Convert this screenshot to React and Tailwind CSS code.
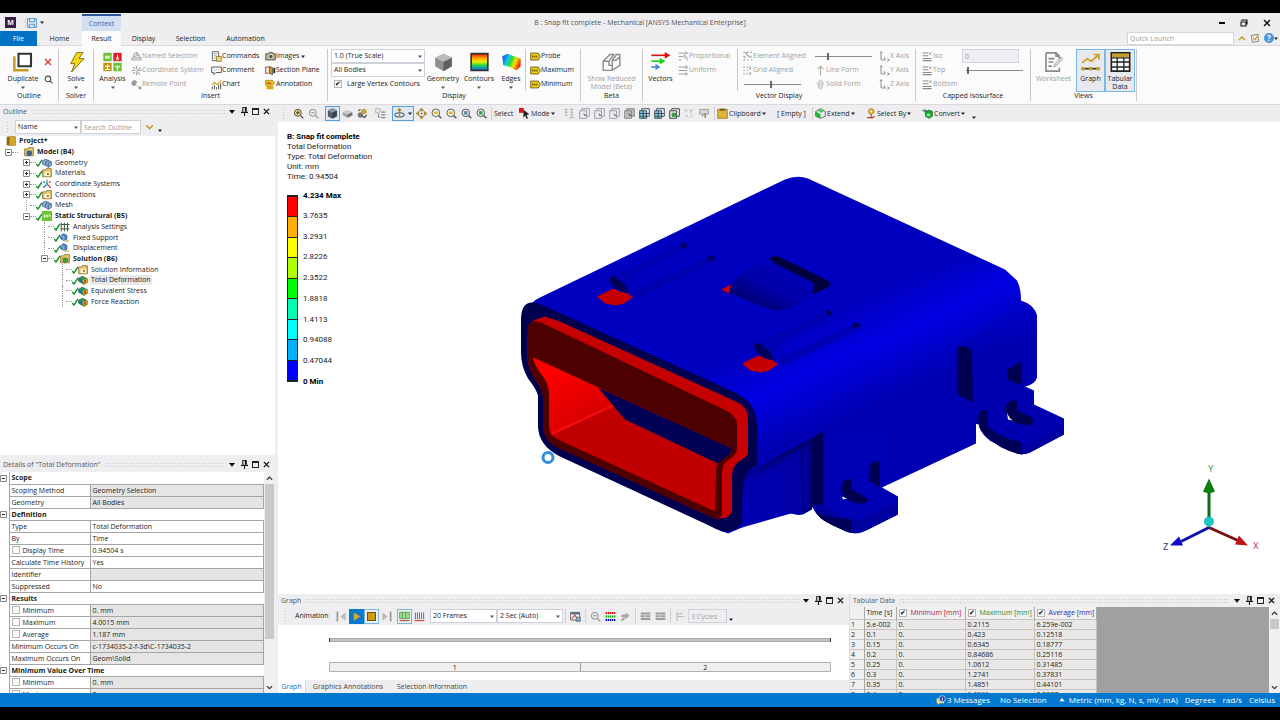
import { useState } from "react";
import clsx from "clsx";

const Svg = ({ size = "w-[11px] h-[11px]", children, box = "0 0 16 16" }) => (
  <svg viewBox={box} className={clsx(size, "shrink-0")} fill="none" aria-hidden="true">
    {children}
  </svg>
);

// ---------- small icons (16 unit grid) ----------
const icons = {
  zoomIn: (
    <>
      <circle cx="7" cy="7" r="5" fill="#f4d77a" stroke="#444" strokeWidth="1.4" />
      <path d="M11 11l4 4M4.500 7h5M7 4.500v5" stroke="#333" strokeWidth="1.500" />
    </>
  ),
  zoomOut: (
    <>
      <circle cx="7" cy="7" r="5" stroke="#888" strokeWidth="1.400" />
      <path d="M11 11l4 4M4.500 7h5" stroke="#888" strokeWidth="1.500" />
    </>
  ),
  zoomBox: (
    <>
      <circle cx="7" cy="7" r="5.500" fill="#fff" stroke="#555" strokeWidth="1.400" />
      <path d="M11 11l4 4" stroke="#555" strokeWidth="2" />
      <path d="M4 5h6v4H4z" fill="#e3b32c" />
    </>
  ),
  zoomBlue: (
    <>
      <circle cx="7" cy="7" r="5.500" fill="#dfe8f4" stroke="#555" strokeWidth="1.400" />
      <path d="M11 11l4 4" stroke="#555" strokeWidth="2" />
      <path d="M4.500 4.500h5v5h-5z" fill="#6c87a8" />
    </>
  ),
  zoomGreen: (
    <>
      <circle cx="7" cy="7" r="5.500" fill="#dff0e4" stroke="#555" strokeWidth="1.400" />
      <path d="M11 11l4 4" stroke="#555" strokeWidth="2" />
      <path d="M4.500 4.500h5v5h-5z" fill="#3c9a57" />
    </>
  ),
  cubeDark: (
    <>
      <path d="M8 1l6 3v8l-6 3-6-3V4z" fill="#55606d" stroke="#333" />
      <path d="M2 4l6 3 6-3-6-3z" fill="#8d99a6" />
      <path d="M8 7v8l6-3V4z" fill="#3a424c" />
    </>
  ),
  cubeFlat: (
    <>
      <path d="M1 6l7-3 7 3v5l-7 3-7-3z" fill="#a6a6a6" />
      <path d="M1 6l7-3 7 3-7 3z" fill="#cfcfcf" />
      <path d="M8 9v5l7-3V6z" fill="#777" />
    </>
  ),
  random: (
    <>
      <circle cx="5" cy="10" r="4" fill="#777" />
      <circle cx="10" cy="5" r="4" fill="#caa43a" />
      <path d="M8 12l3 2 3-4M2 4l3-2" stroke="#333" strokeWidth="1.500" />
    </>
  ),
  treeList: (
    <>
      <path d="M1 1h6v6H1z" stroke="#999" />
      <path d="M9 6h6M9 10h6M9 14h6M5 8v5h3" stroke="#888" strokeWidth="1.500" />
    </>
  ),
  rotate: (
    <>
      <ellipse cx="8" cy="10" rx="7" ry="3" stroke="#333" strokeWidth="1.300" />
      <path d="M8 1v12M5.500 4L8 1l2.500 3" stroke="#b88a12" strokeWidth="1.800" />
    </>
  ),
  pan: (
    <>
      <path d="M8 0l3 4H5zM8 16l3-4H5zM0 8l4-3v6zM16 8l-4-3v6z" fill="#d7a31a" stroke="#5e4a10" strokeWidth=".7" />
      <path d="M7 7h2v2H7z" fill="#5e4a10" />
    </>
  ),
  cursor: (
    <>
      <path d="M0 0h7v7H0z" fill="#e01010" />
      <path d="M7 3l8 6-4 1 2 5-2 1-2-5-3 3z" fill="#222" />
    </>
  ),
  dots: (
    <path d="M1 2h5M1 6h5M2 10h4M9 2h5M10 6h4M9 10h5M3 1v12M11 1v12M8 14h6" stroke="#a9a9a9" strokeWidth="1.500" strokeDasharray="3 1" />
  ),
  boxCursor: (
    <>
      <path d="M1 4h10v11H1zM4 4V1h11v11h-4" stroke="#8a8f94" strokeWidth="1.200" />
      <path d="M6 7l5 4-3 1z" fill="#777" />
    </>
  ),
  boxSolid: (
    <>
      <path d="M1 4h10v11H1zM4 4V1h11v11h-4" fill="#bdbdbd" stroke="#777" strokeWidth="1.200" />
      <path d="M6 7l5 4-3 1z" fill="#555" />
    </>
  ),
  mesh: (
    <>
      <path d="M1 4h10v11H1z" fill="#8dd0ea" />
      <path d="M1 4h10v11H1zM4 4V1h11v11h-4M1 8h14M6 4v11M1 12h10" stroke="#26343c" strokeWidth="1.200" />
    </>
  ),
  meshGreen: (
    <>
      <path d="M1 4h10v11H1z" fill="#d8ead8" />
      <path d="M1 4h10v11H1zM4 4V1h11v11h-4" stroke="#444" strokeWidth="1.400" />
      <path d="M4 7h7v6H4z" fill="#3e9d52" />
    </>
  ),
  xyz: <path d="M1 2l3 3M4 2L1 5M8 2l2 3 2-3M10 5v3M3 10l3 4M12 10l-2 4" stroke="#a9a9a9" strokeWidth="1.200" />,
  tag: (
    <>
      <path d="M1 2h13v7H7l-2 3V9H1z" fill="#d3d3d3" stroke="#8b8b8b" />
      <path d="M9 8v6" stroke="#8a7a3a" strokeWidth="2" />
    </>
  ),
  clipboard: (
    <>
      <path d="M1 2h14v13H1z" fill="#e0b23a" stroke="#8a6a10" />
      <path d="M4 1h8v3H4z" fill="#6f5b1d" />
    </>
  ),
  extend: (
    <>
      <path d="M8 1l7 4v7l-7 3-7-3V5z" fill="#eee" stroke="#333" />
      <path d="M1 5l7 4v6l-7-3z" fill="#18b830" />
      <path d="M4 4l4-2 5 3-4 2z" fill="#35d050" />
    </>
  ),
  selectBy: (
    <>
      <circle cx="9" cy="5" r="4" fill="#e7b52b" stroke="#92700e" />
      <path d="M9 9v4M3 14h8l3-2" stroke="#b3332b" strokeWidth="1.500" />
      <circle cx="9" cy="5" r="1.500" fill="#fff" />
    </>
  ),
  convert: (
    <>
      <path d="M5 5l5-2 5 2v7l-5 3-5-3z" fill="#14a52c" stroke="#0b5d18" />
      <path d="M7 8h5v4H7z" fill="#7cf08c" />
      <path d="M0 4h5M3 2l3 2-3 2" stroke="#333" />
    </>
  ),
  named: (
    <>
      <path d="M1 13h14v-3H1zM3 10l2-7 6 1 2 6" fill="#eee" stroke="#999" strokeWidth="1.200" />
      <path d="M8 1v4M5 8l6-2" stroke="#888" />
    </>
  ),
  coord: (
    <path d="M9 8l5-4M8 9l5 5M6 8H1M8 6V1M3 3l3 3M3 13l3-3M11 8h4M8 11v4" stroke="#a2a2a2" strokeWidth="1.500" />
  ),
  remote: (
    <>
      <path d="M1 4l4-3 4 3-3 6-5-1z" fill="#9a9a9a" />
      <path d="M11 11h4v4h-4z" fill="#999" />
      <path d="M7 9l5 4" stroke="#bbb" />
    </>
  ),
  commands: (
    <>
      <path d="M2 1h9v13H2z" fill="#fff" stroke="#555" strokeWidth="1.300" />
      <path d="M4 4h5M4 7h4M4 10h3" stroke="#777" />
      <path d="M8 8h7v7H8z" fill="#f3d56a" stroke="#7a6920" />
    </>
  ),
  comment: (
    <>
      <path d="M1 3h14v8H7l-3 3v-3H1z" fill="#fff" stroke="#555" strokeWidth="1.400" />
      <path d="M4 7h1M7 7h1M10 7h1" stroke="#555" strokeWidth="1.500" />
    </>
  ),
  chart: (
    <>
      <path d="M2 15v-4M5 15V9M8 15v-3M11 15V8M14 15V6" stroke="#555" strokeWidth="1.400" />
      <path d="M1 9l4-4 4 3 6-6" stroke="#d5a321" strokeWidth="1.500" />
    </>
  ),
  images: (
    <>
      <path d="M1 4h4l1-2h5l1 2h3v9H1z" fill="#b8b089" stroke="#4b4b3c" strokeWidth="1.200" />
      <circle cx="8.500" cy="8" r="3.200" fill="#4c5963" stroke="#fff" />
    </>
  ),
  section: (
    <>
      <path d="M1 3h4M1 3v9h4" stroke="#c23b2d" strokeWidth="1.600" />
      <path d="M6 2l5 2v10l-5-2z" fill="#c79a1b" stroke="#333" />
      <path d="M12 4h3v8h-3z" fill="#3a3a3a" />
    </>
  ),
  annotation: (
    <>
      <path d="M1 2h10l3 3-3 4H1z" fill="#f0c514" stroke="#87690b" />
      <path d="M2 10h10v5H2z" fill="#e0a90e" />
      <path d="M3 6h6" stroke="#c62a1d" strokeWidth="1.600" />
    </>
  ),
  probe: (
    <>
      <path d="M1 3h11l3 5-3 5H1z" fill="#f3cf17" stroke="#5b4c0a" strokeWidth="1.200" />
      <path d="M3 8h8" stroke="#6b5908" strokeWidth="3" strokeDasharray="2 1" />
    </>
  ),
  propo: <path d="M1 3h9M1 8h7M1 13h4M10 1l4 2-4 2M8 6l4 2-4 2M13 9v5" stroke="#9a9a9a" strokeWidth="1.400" />,
  uniform: <path d="M1 3h12M1 8h12M1 13h12M11 1l3 2-3 2M11 11l3 2-3 2" stroke="#9a9a9a" strokeWidth="1.400" />,
  elemAl: <path d="M2 2h2M7 2h2M12 2h2M2 7l3 3M8 6l3 3M13 7v3M2 13h3M8 13h2M13 13h2M5 2l3 4" stroke="#999" strokeWidth="1.600" />,
  gridAl: <path d="M2 3h2M2 8h2M2 13h2M7 3h2M7 8h2M7 13h2M12 2v5M12 10v4" stroke="#999" strokeWidth="1.800" />,
  upArrow: <path d="M8 15V3M4 6l4-4 4 4" stroke="#aaa" strokeWidth="1.600" />,
  upSolid: <path d="M8 1l5 6h-2v5l-3 3-3-3V7H3z" fill="#ddd" stroke="#aaa" />,
  axis: <path d="M3 1v12h7M1 3l2-2 2 2M12 11l3 2-3 2M8 9v3" stroke="#888" strokeWidth="1.400" />,
  iso: (
    <>
      <path d="M1 3h8M1 7h8M1 11h13M1 14h13" stroke="#888" strokeWidth="1.500" />
      <path d="M10 2l4 4M14 2l-4 4" stroke="#999" strokeWidth="1.300" />
    </>
  ),
  exportImg: (
    <>
      <path d="M1 2h13v11H1z" fill="#fff" stroke="#555" strokeWidth="1.400" />
      <path d="M2 4h11" stroke="#31609a" strokeWidth="2" />
      <path d="M3 11l4-5 3 4" stroke="#c33" strokeWidth="1.500" />
      <path d="M9 9h6v6H9z" fill="#6fb0e0" stroke="#555" />
    </>
  ),
  grayChip: <path d="M1 2h14v3H1zM1 6h6v3H1zM8 6h7v3H8zM1 10h14v3H1z" fill="#9c9c9c" />,
  wrench: (
    <>
      <path d="M2 5h6V2l6 5-6 5V9H2z" fill="#a6a6a6" />
      <path d="M2 14l5-4" stroke="#999" strokeWidth="2" />
    </>
  ),
  cyc: <path d="M3 1v14M3 8h11M3 5l8-2" stroke="#bbb" strokeWidth="1.600" />,
  project: (
    <>
      <path d="M1 1h5v14H1z" fill="#8c6a10" />
      <path d="M5 1h10v14H5z" fill="#d8a628" stroke="#8c6a10" />
    </>
  ),
  folder: (
    <>
      <path d="M1 3h5l1-2h8v13H1z" fill="#e9c766" stroke="#7c6220" strokeWidth="1.200" />
      <path d="M4 6h9v7H4z" fill="#f8f3df" />
      <path d="M8 8h3v3H8z" fill="#a9772a" />
    </>
  ),
  model: (
    <>
      <path d="M1 3h5l1-2h8v13H1z" fill="#e9c766" stroke="#7c6220" strokeWidth="1.200" />
      <path d="M8 5l5 2v5l-5 3-4-3V7z" fill="#42658d" />
    </>
  ),
  solution: (
    <>
      <path d="M1 3h5l1-2h8v13H1z" fill="#e9c766" stroke="#7c6220" strokeWidth="1.200" />
      <path d="M8 5l5 2v5l-5 3-4-3V7z" fill="#49933a" />
    </>
  ),
  geom: (
    <>
      <path d="M1 4l5-2 5 2 4 2v6l-5 3-4-3-5-2z" fill="#87abd4" stroke="#2e4c70" />
      <path d="M6 6l5-2M6 6v6M10 8v7M10 8l5-2" stroke="#2e4c70" />
    </>
  ),
  cs: (
    <>
      <path d="M8 7V1" stroke="#2b8a3a" strokeWidth="1.700" />
      <path d="M7 9l-5 5M2 4l3 2" stroke="#2d55bb" strokeWidth="1.700" />
      <path d="M9 9l5 5M14 4l-3 2" stroke="#c03030" strokeWidth="1.700" />
      <circle cx="8" cy="8" r="2" fill="#2fa9a0" />
    </>
  ),
  struct: (
    <>
      <path d="M0 0h16v16H0z" fill="#66c430" />
      <path d="M2 8h12M4 5v6M8 5v6M12 5v3" stroke="#eaffdc" strokeWidth="1.400" />
    </>
  ),
  settings: <path d="M2 1v14M7 1v14M12 1v14M1 4h14M1 11h14" stroke="#385a45" strokeWidth="1.600" />,
  support: (
    <>
      <path d="M6 1l5 3v6l-5 2-5-3V4z" fill="#4b86c8" stroke="#1e3f68" />
      <path d="M1 4l5 2v6" stroke="#cfe3f7" />
      <path d="M8 14l3-2 1 2 3-3" stroke="#d59c1c" strokeWidth="1.600" />
    </>
  ),
  result: (
    <>
      <path d="M1 5l6-3 8 4v6l-5 3-9-5z" fill="#2d9c4c" stroke="#224a2e" />
      <path d="M7 8l8-2v6l-5 3z" fill="#e3b51c" />
      <path d="M1 5l6 3v3l-6-2z" fill="#2a62b8" />
      <path d="M10 8l3-1v5l-3 1z" fill="#d3321f" />
    </>
  ),
};

const Icon = ({ name, size }) => <Svg size={size}>{icons[name]}</Svg>;

const Caret = ({ small }) => (
  <Svg size={small ? "w-[4px] h-[3px]" : "w-[6px] h-[5px]"} box="0 0 8 6">
    <path d="M0 1h8L4 6z" fill="currentColor" />
  </Svg>
);

// ---------- big ribbon pictures ----------
const big = {
  duplicate: (
    <>
      <path d="M1 5v17h17" stroke="#c99b20" strokeWidth="3" />
      <path d="M6 2h15v15H6z" fill="#fff" stroke="#333" strokeWidth="2.500" />
    </>
  ),
  solve: <path d="M12 1l8-1-5 8h6L6 24l4-10H5z" fill="#f5d913" stroke="#665a14" />,
  analysis: (
    <>
      <path d="M1 1h10v10H1zM13 13h10v10H13z" fill="#6cc13a" />
      <path d="M13 1h10v10H13z" fill="#de1d23" />
      <path d="M1 13h10v10H1z" fill="#c29412" />
      <path d="M3 5h6M3 7h6M18 3v5M3 17h6M6 15v6M3 21h6M18 16v6M15 17l3 2 3-2" stroke="#fff" strokeWidth="1.300" />
      <circle cx="18" cy="8" r="1.500" stroke="#fff" />
    </>
  ),
  geometry: (
    <>
      <path d="M12 2l10 5v10l-10 6L2 17V7z" fill="#8f8f8f" />
      <path d="M2 7l10-5 10 5-10 5z" fill="#bcbcbc" />
      <path d="M12 12v11l10-6V7z" fill="#5f5f5f" />
    </>
  ),
  contours: (
    <>
      <defs>
        <linearGradient id="rainbowV" x1="0" y1="0" x2="0" y2="1">
          <stop offset="0" stopColor="#f31212" />
          <stop offset=".3" stopColor="#ffb400" />
          <stop offset=".5" stopColor="#e8f000" />
          <stop offset=".7" stopColor="#19d94b" />
          <stop offset="1" stopColor="#1c63f2" />
        </linearGradient>
      </defs>
      <path d="M2 2h20v20H2z" fill="url(#rainbowV)" stroke="#333" strokeWidth="2" />
    </>
  ),
  edges: (
    <>
      <defs>
        <linearGradient id="rainbowH" x1="0" y1=".2" x2="1" y2=".6">
          <stop offset="0" stopColor="#1746e8" />
          <stop offset=".3" stopColor="#0fc9e8" />
          <stop offset=".5" stopColor="#2be02b" />
          <stop offset=".7" stopColor="#f5e400" />
          <stop offset="1" stopColor="#f01c0e" />
        </linearGradient>
      </defs>
      <path d="M1 5l6-3 16 6v9l-5 5-10-5-6-1z" fill="url(#rainbowH)" />
    </>
  ),
  reduced: (
    <path
      d="M2 11v11h11l9-6V6l-5 4h-4v6H9v-5zM2 11l8-8h5l-6 8M13 10l5-7h4v3M13 22v-6"
      stroke="#8a8a8a"
      strokeWidth="1.700"
    />
  ),
  vectors: (
    <>
      <path d="M1 4h17" stroke="#e11010" strokeWidth="2" />
      <path d="M17 0l7 4-7 4z" fill="#e11010" />
      <path d="M1 11h11" stroke="#1fd01f" strokeWidth="2" />
      <path d="M11 7l7 4-7 4z" fill="#1fd01f" />
      <path d="M1 18h6" stroke="#4a86d8" strokeWidth="2" />
      <path d="M6 14l6 4-6 4z" fill="#4a86d8" />
    </>
  ),
  worksheet: (
    <>
      <path d="M3 1h12l4 4v4M3 1v22h16v-4M15 1v4h4" stroke="#8a8a8a" strokeWidth="2" />
      <path d="M6 8h7M6 12h6M6 17h4" stroke="#8a8a8a" strokeWidth="2" />
      <path d="M12 18l2-4 7-8 2 2-7 8z" fill="#ddd" stroke="#999" />
    </>
  ),
  graph: (
    <>
      <path d="M2 13l6-5 5 3 8-7M16 3h6v6" stroke="#c99b20" strokeWidth="2" />
      <path d="M1 20h22" stroke="#333" strokeWidth="2" />
      <circle cx="3" cy="20" r="2.300" fill="#c99b20" />
      <circle cx="12" cy="20" r="2.300" fill="#c99b20" />
      <circle cx="21" cy="20" r="2.300" fill="#c99b20" />
    </>
  ),
  table: (
    <>
      <path d="M1 1h22v22H1z" fill="#fff" stroke="#222" strokeWidth="2" />
      <path d="M2 2h20v4H2z" fill="#c99b20" />
      <path d="M1 7h22M1 12h22M1 18h22M8 7v16M16 7v16" stroke="#222" strokeWidth="1.600" />
    </>
  ),
};

const BigButton = ({ icon, label, arrow, disabled, active, width = "w-[36px]" }) => (
  <button
    disabled={disabled}
    className={clsx(
      "flex flex-col items-center shrink-0 h-[43px] pt-[2px] border",
      active ? "border-[#7ab8e4] bg-[#e8e8ef]" : "border-transparent",
      disabled && "text-[#a0a0a0]",
      width
    )}
  >
    <Svg size="w-[21px] h-[20px]" box="0 0 24 24">{big[icon]}</Svg>
    <span className="mt-[3px] leading-[8px] whitespace-pre text-center">{label}</span>
    {arrow && <span className="mt-[3px] text-[#555]"><Caret small /></span>}
  </button>
);

const SmallButton = ({ icon, label, disabled, arrow }) => (
  <button
    disabled={disabled}
    className={clsx("flex items-center h-[14px] whitespace-nowrap", disabled && "text-[#a0a0a0]")}
  >
    <Icon name={icon} />
    {label}
    {arrow && <span className="ml-[2px]"><Caret small /></span>}
  </button>
);

const Column = ({ items, disabled, width }) => (
  <div className={clsx("flex flex-col shrink-0", width)}>
    {items.map(([icon, label, arrow]) => (
      <SmallButton key={label} icon={icon} label={label} disabled={disabled} arrow={arrow} />
    ))}
  </div>
);

const Group = ({ label, width, children }) => (
  <section className={clsx("flex flex-col shrink-0 my-[3px] border-r border-[#c9c9cd]", width)}>
    <div className="flex h-[42px]">{children}</div>
    <div className="text-center leading-[9px]">{label}</div>
  </section>
);

const Range = ({ label, width, value }) => (
  <input
    type="range"
    aria-label={label}
    defaultValue={value}
    disabled
    className={clsx(
      "appearance-none h-[8px] my-[3px] bg-transparent bg-[linear-gradient(#888,#888)] bg-[size:100%_1px] bg-center bg-no-repeat",
      "[&::-webkit-slider-thumb]:appearance-none [&::-webkit-slider-thumb]:w-[2px] [&::-webkit-slider-thumb]:h-[7px] [&::-webkit-slider-thumb]:bg-[#666]",
      width
    )}
  />
);

const Combo = ({ label, value, width = "w-full", height = "h-[14px]" }) => (
  <label className={clsx("relative flex items-center shrink-0", width)}>
    <select
      aria-label={label}
      className={clsx("appearance-none w-full pl-[2px] border border-[#cfd0da] bg-white", height)}
    >
      <option>{value}</option>
    </select>
    <span className="absolute right-[3px] text-[#555] pointer-events-none"><Caret small /></span>
  </label>
);

const Check = ({ label, checked }) => (
  <input
    type="checkbox"
    aria-label={label}
    defaultChecked={checked}
    className="appearance-none w-[8px] h-[8px] border border-[#b5b5b5] bg-white shrink-0 text-black text-[7px] leading-[6px] text-center checked:before:content-['✔'] before:block"
  />
);

const Divider = () => <span className="w-px h-[14px] mx-[2px] bg-[#cfcfd4] shrink-0" />;

const Grip = () => (
  <span className="w-[4px] h-[12px] shrink-0 bg-[radial-gradient(#bbb_1px,transparent_1px)] bg-[size:3px_3px]" />
);

const PanelHeader = ({ title }) => (
  <header className="flex items-center h-[13px] pl-[3px] pr-[5px] gap-[4px] text-[#555] shrink-0">
    <h2 className="whitespace-nowrap">{title}</h2>
    <span className="flex-1 h-[5px] bg-[radial-gradient(#c2c2c8_1px,transparent_1px)] bg-[size:3px_3px]" />
    <button aria-label="Options" className="text-black"><Caret /></button>
    <button aria-label="Pin">
      <Svg size="w-[7px] h-[9px] ml-[2px]" box="0 0 8 10">
        <path d="M2 0h4v5M2 0v5M0 6h8M4 6v4M5 0v5" stroke="#111" strokeWidth="1.200" />
      </Svg>
    </button>
    <button aria-label="Maximize" className="w-[7px] h-[7px] border border-t-2 border-[#222]" />
    <button aria-label="Close">
      <Svg size="w-[7px] h-[7px]" box="0 0 8 8">
        <path d="M1 1l6 6M7 1L1 7" stroke="#111" strokeWidth="1.500" />
      </Svg>
    </button>
  </header>
);

const ScrollBar = ({ thumb }) => (
  <div className="flex flex-col items-center w-[11px] shrink-0 bg-[#f0f0f0]">
    <Svg size="w-[7px] h-[12px]" box="0 0 8 12"><path d="M1 8l3-3 3 3" stroke="#333" strokeWidth="1.400" /></Svg>
    <div className={clsx("w-[9px] bg-[#c9c9c9]", thumb)} />
    <div className="flex-1" />
    <Svg size="w-[7px] h-[12px]" box="0 0 8 12"><path d="M1 5l3 3 3-3" stroke="#333" strokeWidth="1.400" /></Svg>
  </div>
);

// ---------- title bar + tabs ----------
const TitleBar = () => (
  <div className="grid grid-cols-[1fr_auto_1fr] h-[18px] bg-[#eeeef1] shrink-0">
    <div className="flex items-center">
      <span className="ml-[5px] w-[11px] h-[11px] bg-[#3b1c45] text-white font-bold leading-[11px] text-center">M</span>
      <button aria-label="Save" className="ml-[9px] pl-[1px] border-l border-[#d5d5da]">
        <Svg size="w-[10px] h-[10px]">
          <path d="M1 1h14v14H1zM4 1v5h8V1M4 15v-5h8v5" stroke="#3f88c5" strokeWidth="1.400" />
        </Svg>
      </button>
      <span className="ml-[3px]"><Caret small /></span>
      <div className="ml-[38px] w-[39px] h-[18px] border-t-2 border-[#2b5797] bg-[#d3dff3] text-[#3b66a8] text-center leading-[16px]">
        Context
      </div>
    </div>
    <h1 className="text-[#555] leading-[19px]">B : Snap fit complete - Mechanical [ANSYS Mechanical Enterprise]</h1>
    <div className="flex justify-end items-center gap-[15px] pr-[9px]">
      <button aria-label="Minimize" className="w-[6px] h-[2px] bg-black" />
      <button aria-label="Restore">
        <Svg size="w-[8px] h-[8px]" box="0 0 8 8">
          <path d="M2 2V1h5v4H6M1 3h5v4H1z" stroke="#111" strokeWidth="1.100" />
        </Svg>
      </button>
      <button aria-label="Close window">
        <Svg size="w-[8px] h-[8px]" box="0 0 8 8">
          <path d="M1 1l6 6M7 1L1 7" stroke="#111" strokeWidth="1.500" />
        </Svg>
      </button>
    </div>
  </div>
);

const tabs = [
  ["File", "w-[37px] bg-[#0072c6] text-white"],
  ["Home", "w-[45px]"],
  ["Result", "w-[39px] bg-[#fbfbfb]"],
  ["Display", "w-[45px]"],
  ["Selection", "w-[49px]"],
  ["Automation", "w-[61px]"],
];

const Tabs = () => (
  <nav className="flex h-[15px] bg-[#eeeef1] shrink-0 border-b border-[#d9d9de]">
    {tabs.map(([name, cls]) => (
      <button key={name} className={clsx("h-[15px] leading-[16px]", cls)}>{name}</button>
    ))}
    <div className="flex items-center gap-[4px] ml-auto pr-[2px]">
      <input
        aria-label="Quick Launch"
        placeholder="Quick Launch"
        className="w-[107px] h-[13px] pl-[2px] bg-white border border-[#d5d5da] placeholder:text-[#a0a0a0]"
      />
      <Svg size="w-[8px] h-[6px]" box="0 0 8 6"><path d="M1 5l3-3 3 3" stroke="#c99b20" strokeWidth="1.500" /></Svg>
      <Svg size="w-[10px] h-[10px]">
        <path d="M2 4l10-2 2 11-10 2z" stroke="#777" strokeWidth="1.400" />
        <path d="M5 8l3 3 6-9" stroke="#c99b20" strokeWidth="1.800" />
      </Svg>
      <button aria-label="Help" className="flex items-center">
        <span className="w-[10px] h-[10px] rounded-full bg-[#4a93e0] text-white font-bold text-[8px] leading-[10px] text-center">?</span>
        <Caret small />
      </button>
    </div>
  </nav>
);

const Ribbon = () => (
  <div className="flex h-[59px] bg-[#fbfbfb] border-b border-[#d9d9de] shrink-0 overflow-hidden">
    <Group label="Outline" width="w-[59px]">
      <BigButton icon="duplicate" label="Duplicate" arrow width="w-[40px] ml-[3px]" />
      <div className="flex flex-col w-[10px] items-center">
        <button aria-label="Delete" className="mt-[9px]">
          <Svg size="w-[8px] h-[8px]" box="0 0 8 8"><path d="M1 1l6 6M7 1L1 7" stroke="#dd2c2c" strokeWidth="1.200" /></Svg>
        </button>
        <button aria-label="Find" className="mt-[9px]">
          <Svg size="w-[9px] h-[9px]"><circle cx="7" cy="7" r="5" stroke="#444" strokeWidth="1.800" /><path d="M11 11l4 4" stroke="#444" strokeWidth="2" /></Svg>
        </button>
      </div>
    </Group>
    <Group label="Solver" width="w-[35px]">
      <BigButton icon="solve" label="Solve" arrow width="w-[34px]" />
    </Group>
    <Group label="Insert" width="w-[234px]">
      <BigButton icon="analysis" label="Analysis" arrow width="w-[37px]" />
      <Column disabled width="w-[80px]" items={[["named", "Named Selection"], ["coord", "Coordinate System"], ["remote", "Remote Point"]]} />
      <Column width="w-[54px]" items={[["commands", "Commands"], ["comment", "Comment"], ["chart", "Chart"]]} />
      <Column width="w-[60px]" items={[["images", "Images", true], ["section", "Section Plane"], ["annotation", "Annotation"]]} />
    </Group>
    <Group label="Display" width="w-[253px]">
      <div className="flex flex-col w-[94px] ml-[3px]">
        <Combo label="Scale" value="1.0 (True Scale)" />
        <Combo label="Bodies" value="All Bodies" />
        <label className="flex items-center gap-[5px] h-[14px] pl-[3px] whitespace-nowrap">
          <Check checked />Large Vertex Contours
        </label>
      </div>
      <BigButton icon="geometry" label="Geometry" arrow />
      <BigButton icon="contours" label="Contours" arrow />
      <BigButton icon="edges" label="Edges" arrow width="w-[28px]" />
      <Column width="w-[52px] pl-[4px] border-l border-[#c9c9cd]" items={[["probe", "Probe"], ["probe", "Maximum"], ["probe", "Minimum"]]} />
    </Group>
    <Group label="Beta" width="w-[62px]">
      <BigButton icon="reduced" label={"Show Reduced\nModel (Beta)"} disabled width="w-[61px]" />
    </Group>
    <Group label="Vector Display" width="w-[273px]">
      <BigButton icon="vectors" label="Vectors" width="w-[35px]" />
      <Column disabled width="w-[59px]" items={[["propo", "Proportional"], ["uniform", "Uniform"]]} />
      <div className="flex flex-col w-[78px] pl-[4px] border-l border-[#c9c9cd]">
        <SmallButton icon="elemAl" label="Element Aligned" disabled />
        <SmallButton icon="gridAl" label="Grid Aligned" disabled />
        <Range label="Density" width="w-[57px] ml-[2px]" value={47} />
      </div>
      <div className="flex flex-col w-[64px]">
        <Range label="Length" width="w-[57px]" value={22} />
        <SmallButton icon="upArrow" label="Line Form" disabled />
        <SmallButton icon="upSolid" label="Solid Form" disabled />
      </div>
      <Column disabled width="w-[32px]" items={[["axis", "X Axis"], ["axis", "Y Axis"], ["axis", "Z Axis"]]} />
    </Group>
    <Group label="Capped Isosurface" width="w-[115px]">
      <Column disabled width="w-[40px] ml-[6px]" items={[["iso", "Iso"], ["iso", "Top"], ["iso", "Bottom"]]} />
      <div className="flex flex-col">
        <input aria-label="Isovalue" disabled defaultValue="0" className="w-[57px] h-[14px] pl-[2px] bg-[#eeeef3] border border-[#d5d5dc] text-[#a0a0a0]" />
        <Range label="Isovalue slider" width="w-[57px] ml-[4px]" value={2} />
      </div>
    </Group>
    <Group label="Views" width="w-[106px]">
      <BigButton icon="worksheet" label="Worksheet" disabled width="w-[45px]" />
      <BigButton icon="graph" label="Graph" active width="w-[29px]" />
      <BigButton icon="table" label={"Tabular\nData"} active width="w-[30px]" />
    </Group>
  </div>
);

// ---------- outline ----------
// [level, label, icon, expander, bold]
const outline = [
  [0, "Project*", "project", null, true],
  [1, "Model (B4)", "model", "-", true],
  [2, "Geometry", "geom", "+"],
  [2, "Materials", "folder", "+"],
  [2, "Coordinate Systems", "cs", "+"],
  [2, "Connections", "folder", "+"],
  [2, "Mesh", "geom", null],
  [2, "Static Structural (B5)", "struct", "-", true],
  [3, "Analysis Settings", "settings", null],
  [3, "Fixed Support", "support", null],
  [3, "Displacement", "support", null],
  [3, "Solution (B6)", "solution", "-", true],
  [4, "Solution Information", "folder", null],
  [4, "Total Deformation", "result", null],
  [4, "Equivalent Stress", "result", null],
  [4, "Force Reaction", "result", null],
];

const indent = ["pl-0", "pl-0", "pl-[18px]", "pl-[36px]", "pl-[54px]"];

const Expander = ({ sign }) => (
  <svg viewBox="0 0 7 7" className="w-[7px] h-[7px]" fill="none">
    <path d="M.5 .5h6v6h-6z" fill="#fff" stroke="#8a8a8a" />
    <path d={sign === "+" ? "M2 3.500h3M3.500 2v3" : "M2 3.500h3"} stroke="#222" />
  </svg>
);

const TreeRow = ({ row, selected, onSelect }) => {
  const [level, label, icon, sign, bold] = row;
  return (
    <li className={clsx("flex items-center", indent[level])}>
      {level > 0 && (
        <span className="flex items-center self-stretch w-[18px] pl-[5px]">
          {sign ? (
            <Expander sign={sign} />
          ) : (
            <span className="self-stretch ml-[3px] w-[4px] border-l border-dotted border-[#999]" />
          )}
          <span className="flex-1 border-t border-dotted border-[#999]" />
        </span>
      )}
      <Svg size="w-[6px] h-[9px]" box="0 0 6 9">
        {level > 1 && <path d="M0 6l2 2 4-6" stroke="#16952b" strokeWidth="1.500" />}
      </Svg>
      <Icon name={icon} size="w-[10px] h-[10px]" />
      <button
        onClick={() => onSelect(label)}
        className={clsx("ml-[2px] px-[1px] leading-[10px]", bold && "font-bold", selected && "bg-[#e9e9e9]")}
      >
        {label}
      </button>
    </li>
  );
};

const Outline = () => {
  const [selected, setSelected] = useState("Total Deformation");
  return (
    <section className="flex flex-col flex-1 min-h-0">
      <PanelHeader title="Outline" />
      <div className="flex items-center h-[18px] pl-[6px] shrink-0">
        <Grip />
        <Combo label="Filter type" value="Name" width="w-[66px] ml-[5px]" />
        <input
          aria-label="Search Outline"
          placeholder="Search Outline"
          className="w-[60px] h-[14px] pl-[2px] bg-white border border-[#cfd0da] placeholder:text-[#9a9a9a]"
        />
        <Svg size="w-[9px] h-[7px] mx-[4px]" box="0 0 8 6"><path d="M1 1l3 3 3-3" stroke="#c99b20" strokeWidth="1.500" /></Svg>
        <span className="mt-[6px]"><Caret small /></span>
      </div>
      <div className="flex-1 bg-white text-[#222]">
        <ul className="grid auto-rows-fr h-[171px] whitespace-nowrap">
          {outline.map((row) => (
            <TreeRow key={row[1]} row={row} selected={selected === row[1]} onSelect={setSelected} />
          ))}
        </ul>
      </div>
    </section>
  );
};

// ---------- details ----------
const details = [
  { head: "Scope" },
  { name: "Scoping Method", value: "Geometry Selection", ro: true },
  { name: "Geometry", value: "All Bodies", ro: true },
  { head: "Definition" },
  { name: "Type", value: "Total Deformation" },
  { name: "By", value: "Time" },
  { name: "Display Time", value: "0.94504 s", check: true },
  { name: "Calculate Time History", value: "Yes" },
  { name: "Identifier", value: "", ro: true },
  { name: "Suppressed", value: "No" },
  { head: "Results" },
  { name: "Minimum", value: "0. mm", ro: true, check: true },
  { name: "Maximum", value: "4.0015 mm", ro: true, check: true },
  { name: "Average", value: "1.187 mm", ro: true, check: true },
  { name: "Minimum Occurs On", value: "c-1734035-2-f-3d\\C-1734035-2", ro: true },
  { name: "Maximum Occurs On", value: "Geom\\Solid", ro: true },
  { head: "Minimum Value Over Time" },
  { name: "Minimum", value: "0. mm", ro: true, check: true },
  { name: "Maximum", value: "0. mm", ro: true, check: true },
];

const Details = () => (
  <section className="flex flex-col h-[235px] shrink-0">
    <PanelHeader title={'Details of "Total Deformation"'} />
    <div className="flex flex-1 min-h-0 mt-px">
      <div className="flex-1 overflow-hidden bg-white">
        <table className="w-full table-fixed border-collapse whitespace-nowrap text-[#222]">
          <colgroup>
            <col className="w-[9px]" />
            <col className="w-[81px]" />
            <col />
          </colgroup>
          <tbody>
            {details.map((row, i) => (
              <tr key={i} className="h-[12px] leading-[11px]">
                <td className="p-0">{row.head && <Expander sign="-" />}</td>
                {row.head ? (
                  <th colSpan={2} className="p-0 pl-[2px] text-left font-bold border-b border-l border-[#a5a5a5]">{row.head}</th>
                ) : (
                  <>
                    <td className="p-0 pl-[2px] border border-[#a5a5a5] overflow-hidden">
                      <span className="flex items-center gap-[3px]">
                        {row.check && <Check label={row.name} />}
                        {row.name}
                      </span>
                    </td>
                    <td className={clsx("p-0 pl-[2px] border border-[#a5a5a5]", row.ro && "bg-[#e7e5e3]")}>{row.value}</td>
                  </>
                )}
              </tr>
            ))}
          </tbody>
        </table>
      </div>
      <ScrollBar thumb="h-[155px]" />
    </div>
  </section>
);

// ---------- graphics window ----------
const ToolIcon = ({ name, active }) => (
  <button
    aria-label={name}
    className={clsx(
      "flex items-center justify-center w-[15px] h-[15px] shrink-0 border",
      active ? "border-[#5a9fd4] bg-[#dce9f5]" : "border-transparent"
    )}
  >
    <Icon name={name} />
  </button>
);

const ToolMenu = ({ icon, label, width }) => (
  <button className={clsx("flex items-center gap-[1px] shrink-0 whitespace-nowrap", width)}>
    {icon && <Icon name={icon} />}
    {label}
    <Caret small />
  </button>
);

const GraphicsToolbar = () => (
  <div className="flex items-center h-[17px] pl-[4px] bg-[#eeeef1] shrink-0 overflow-hidden">
    <Grip />
    <span className="w-[5px]" />
    <ToolIcon name="zoomIn" />
    <ToolIcon name="zoomOut" />
    <span className="w-[4px]" />
    <ToolIcon name="cubeDark" active />
    <ToolIcon name="cubeFlat" />
    <ToolIcon name="random" />
    <span className="w-[3px]" />
    <ToolIcon name="treeList" />
    <span className="w-[4px]" />
    <button aria-label="rotate" className="flex items-center justify-around w-[22px] h-[15px] shrink-0 border border-[#5a9fd4] bg-[#dce9f5]">
      <Icon name="rotate" />
      <Caret small />
    </button>
    <ToolIcon name="pan" />
    <ToolIcon name="zoomBox" />
    <ToolIcon name="zoomBox" />
    <ToolIcon name="zoomBlue" />
    <ToolIcon name="zoomGreen" />
    <Divider />
    <span className="w-[25px]">Select</span>
    <ToolMenu icon="cursor" label="Mode" width="w-[43px]" />
    <ToolIcon name="dots" />
    <ToolIcon name="boxCursor" />
    <ToolIcon name="boxCursor" />
    <ToolIcon name="boxCursor" />
    <ToolIcon name="boxSolid" />
    <ToolIcon name="mesh" />
    <ToolIcon name="mesh" />
    <ToolIcon name="meshGreen" />
    <ToolIcon name="xyz" />
    <ToolIcon name="tag" />
    <Divider />
    <ToolMenu icon="clipboard" label="Clipboard" width="w-[60px]" />
    <span className="w-[33px] whitespace-nowrap">[ Empty ]</span>
    <Divider />
    <ToolMenu icon="extend" label="Extend" width="w-[50px]" />
    <ToolMenu icon="selectBy" label="Select By" width="w-[57px]" />
    <ToolMenu icon="convert" label="Convert" width="w-[50px]" />
    <span className="mt-[7px]"><Caret small /></span>
  </div>
);

const bands = [
  ["bg-[#ff0000]", "3.7635"],
  ["bg-[#ffb000]", "3.2931"],
  ["bg-[#ffff00]", "2.8226"],
  ["bg-[#b0ff00]", "2.3522"],
  ["bg-[#00ff00]", "1.8818"],
  ["bg-[#00ffb0]", "1.4113"],
  ["bg-[#00ffff]", "0.94088"],
  ["bg-[#00b0ff]", "0.47044"],
  ["bg-[#0000ff]", "0 Min"],
];

const Legend = () => (
  <div className="relative w-[120px] pt-[10px] pl-[9px] text-[8px] font-[Roboto,sans-serif] text-[#222] whitespace-nowrap leading-[10px]">
    <p className="font-bold text-black">B: Snap fit complete</p>
    <p>Total Deformation</p>
    <p>Type: Total Deformation</p>
    <p>Unit: mm</p>
    <p>Time: 0.94504</p>
    <div className="flex gap-[5px] mt-[13px]">
      <div className="flex flex-col w-[11px] h-[187px] border-x border-b-2 border-t-2 border-[#222]">
        {bands.map(([color], i) => (
          <div key={color} className={clsx("flex-1 border-[#222]", i > 0 && "border-t", color)} />
        ))}
      </div>
      <div className="flex flex-col h-[187px]">
        <span className="h-0 leading-[2px] font-bold text-black">4.234 Max</span>
        {bands.map(([, text]) => (
          <span key={text} className={clsx("flex items-end flex-1 leading-[1px]", text === "0 Min" && "font-bold text-black")}>
            {text}
          </span>
        ))}
      </div>
    </div>
  </div>
);

const Rib = () => (
  <>
    <path d="M613 276L684 243Q688 244 687 249L628 280z" fill="url(#rib)" />
    <path d="M628 293L712 255L718 260L640 298z" fill="#0000a4" opacity=".6" />
    <path d="M609 277Q611 275 615 276L624 283Q628 288 628 293L619 290Q610 286 609 277z" fill="#000058" />
    <path d="M615 276Q625 272 634 277Q638 283 629 293Q628 286 624 283z" fill="#0000b4" />
    <path d="M681 242l6 2-1 4-4-1zM709 255l7 2-5 4-3-2z" fill="#000058" />
    <path d="M597 296L613 288L620 291L628 293L633 297L624 303L616 305L605 303z" fill="#c40000" />
  </>
);

const Part = () => (
  <svg
    viewBox="278 122 1002 471"
    className="absolute inset-0 w-full h-full"
    fill="none"
    role="img"
    aria-label="Deformed connector shell"
  >
    <defs>
      <linearGradient id="shell" gradientUnits="userSpaceOnUse" x1="784" y1="338" x2="824" y2="426">
        <stop offset="0" stopColor="#0000c0" />
        <stop offset=".42" stopColor="#0000e2" />
        <stop offset=".6" stopColor="#0000d6" />
        <stop offset="1" stopColor="#0000b2" />
      </linearGradient>
      <linearGradient id="rib" gradientUnits="userSpaceOnUse" x1="645" y1="258" x2="653" y2="275">
        <stop offset="0" stopColor="#0000a8" />
        <stop offset="1" stopColor="#0000c4" />
      </linearGradient>
      <linearGradient id="ramp" gradientUnits="userSpaceOnUse" x1="785" y1="258" x2="758" y2="306">
        <stop offset="0" stopColor="#0000bc" />
        <stop offset=".6" stopColor="#0000a8" />
        <stop offset="1" stopColor="#000078" />
      </linearGradient>
      <linearGradient id="under" gradientUnits="userSpaceOnUse" x1="778" y1="440" x2="790" y2="468">
        <stop offset="0" stopColor="#0000b2" />
        <stop offset=".45" stopColor="#00006a" />
        <stop offset=".8" stopColor="#0000a8" />
        <stop offset="1" stopColor="#0000b0" />
      </linearGradient>
      <linearGradient id="wall" gradientUnits="userSpaceOnUse" x1="553" y1="370" x2="590" y2="425">
        <stop offset="0" stopColor="#ff0000" />
        <stop offset="1" stopColor="#d40000" />
      </linearGradient>
      <linearGradient id="rear" gradientUnits="userSpaceOnUse" x1="995" y1="315" x2="1003" y2="345">
        <stop offset="0" stopColor="#0000c8" />
        <stop offset="1" stopColor="#0000b0" />
      </linearGradient>
    </defs>
    {/* rear skirt and rear mounting tab */}
    <path d="M960 320L1021 300Q1034 304 1037 315V377Q1035 384 1025 386L1034 390V404L1064 418V434L1030 452Q1022 456 1012 451L990 440Q982 434 979 424L960 420z" fill="#0000b0" />
    {/* shell body */}
    <path
      d="M540 297L785 179Q797 174 808 178L1005 269L1017 280Q1021 288 1021 300L1021 330L976 360V443L882 487L742 527L728 533L715 528L560 440L530 352V310Q530 301 540 297z"
      fill="url(#shell)"
    />
    <path d="M960 346L1021 301Q1034 304 1037 315L1037 372L1010 392L976 408V350z" fill="url(#rear)" />
    <path d="M957 347Q963 343 972 350L973 402L961 396Q956 392 957 385z" fill="#000050" />
    <path d="M1007 369L1022 361V385L1008 379z" fill="#000050" />
    {/* underside and lower side walls */}
    <path d="M742 478L758 467L823 431V500L781 509L742 527z" fill="url(#under)" />
    <path d="M781 462L803 446V514Q795 516 781 509z" fill="#0000a4" />
    <path d="M800 448L812 440V509L803 514z" fill="#000082" />
    <path d="M812 440L823 431V505L815 510L811 505z" fill="#000052" />
    <path d="M806 450v58" stroke="#0000b0" strokeWidth="3" />
    {/* front mounting tab */}
    <path d="M823 440L882 430V487L898 496V514L866 530Q856 535 846 531L824 520Q813 512 813 505L823 504z" fill="#0000b4" />
    <path d="M813 505L824 506L850 518Q858 521 866 517L898 501V514L866 530Q856 535 846 531L824 520Q815 514 813 505z" fill="#0000a0" />
    <path d="M815 510Q828 518 852 519L852 532Q832 527 820 517z" fill="#000058" />
    <path d="M869 467Q874 458 880 462V487L869 480z" fill="#000050" />
    <path d="M842 484Q845 477 851 479L852 489Q864 495 869 500Q864 505 854 502Q842 498 841 488z" fill="#000050" />
    <path d="M842 496l5 2-4 1z" fill="#fff" />
    {/* rear mounting tab details */}
    <path d="M987 430L1015 444Q1022 447 1030 443L1064 424V434L1030 452Q1022 456 1012 451L990 440Q982 434 979 426z" fill="#0000a0" />
    <path d="M978 416Q980 407 988 410V426Q1000 437 1022 442L1022 454Q1000 450 984 434Q977 426 978 416z" fill="#000058" />
    <path d="M1006 406Q1010 397 1017 401V410L1034 418Q1034 425 1025 425Q1010 422 1006 413z" fill="#000050" />
    <path d="M1007 412q2 6 6 8l-5-1z" fill="#fff" />
    {/* latch window */}
    <path d="M731 284Q752 262 773 259L812 282L813 294Q790 312 772 310L728 292z" fill="url(#ramp)" />
    <path d="M769 258Q773 254 781 257L828 280Q833 283 828 287L813 294V282L777 264z" fill="#00003c" />
    <path d="M721 289L731 284L729 293z" fill="#c40000" />
    <Rib />
    <g transform="translate(145 67)">
      <Rib />
    </g>
    {/* front face */}
    <path
      d="M524 306Q529 299 541 304L735 392Q757 402 757 425V465Q748 468 745 477Q742 482 742 522Q735 533 722 531L560 456Q538 445 538 425V395Q536 388 528 378Q521 366 521 352V320Q521 310 524 306z"
      fill="#00004e"
    />
    <path
      d="M528 326Q530 320 545 316L560 321L738 402Q748 407 748 418V452Q747 457 740 460Q733 465 732 474V511Q729 519 715 518L560 448Q543 440 543 425V395Q542 388 534 377Q527 366 527 350z"
      fill="#c40000"
    />
    <path
      d="M528 326Q531 319 541 322L724 409Q737 415 737 424V448Q736 455 729 459Q722 463 722 472V512Q722 518 715 518L560 448Q543 440 543 425V395Q542 388 534 377Q527 366 527 350z"
      fill="#4c0000"
    />
    <path
      d="M533 357L553 366L732 448Q732 454 725 457Q716 462 716 470L715 511L560 440Q549 435 549 425V392Q549 384 543 376Q534 364 533 357z"
      fill="#c00000"
    />
    <path d="M533 357L598 387L615 406L552 435Q549 432 549 425V392Q549 384 543 376Q534 364 533 357z" fill="url(#wall)" />
    <path d="M552 433L613 405" stroke="#f01010" strokeWidth="2" />
    <path d="M598 387L732 448Q732 454 725 457L718 463L625 419z" fill="#000054" />
    <circle cx="548" cy="457" r="5" fill="#fff" stroke="#2f8fdc" strokeWidth="3" />
    {/* orientation triad */}
    <path d="M1209 526V490" stroke="#0d6b17" strokeWidth="3" />
    <path d="M1209 478l6 13q-6 3-12 0z" fill="#0a7d14" />
    <path d="M1209 527L1238 540" stroke="#7d1010" strokeWidth="3" />
    <path d="M1248 545l-13-1 4-9z" fill="#c01414" />
    <path d="M1209 527L1181 541" stroke="#0f0fae" strokeWidth="3" />
    <path d="M1170 545l9-9 4 9z" fill="#0d0dc8" />
    <circle cx="1209" cy="521" r="5" fill="#1fc4c4" />
    <g fontSize="9" fontFamily="Roboto, sans-serif">
      <text x="1208" y="471" fill="#3f9a4d">Y</text>
      <text x="1253" y="548" fill="#bb4a55">X</text>
      <text x="1163" y="549" fill="#3a3a78">Z</text>
    </g>
  </svg>
);

// ---------- graph ----------
const BarButton = ({ label, className, children }) => (
  <button aria-label={label} className={clsx("flex items-center justify-center w-[15px] h-[15px] shrink-0", className)}>
    {children}
  </button>
);

const GraphPanel = () => (
  <section className="flex flex-col flex-1 min-w-0">
    <PanelHeader title="Graph" />
    <div className="flex items-center h-[18px] pl-[6px] shrink-0">
      <Grip />
      <span className="w-[39px] ml-[7px]">Animation</span>
      <BarButton label="First frame">
        <Svg><path d="M2 1v14" stroke="#999" strokeWidth="2.500" /><path d="M14 2v12L6 8z" fill="#bbb" /></Svg>
      </BarButton>
      <BarButton label="Play" className="bg-[#0a78cc]">
        <Svg><path d="M4 2l10 6-10 6z" fill="#d6a52a" /></Svg>
      </BarButton>
      <BarButton label="Stop" className="border border-[#7ab8e4]">
        <span className="w-[9px] h-[9px] bg-[#d19c10] border border-[#6b5212]" />
      </BarButton>
      <BarButton label="Last frame">
        <Svg><path d="M14 1v14" stroke="#999" strokeWidth="2.500" /><path d="M2 2v12l8-6z" fill="#bbb" /></Svg>
      </BarButton>
      <span className="w-[3px]" />
      <BarButton label="Distributed" className="border border-[#7ab8e4] bg-[#e3f0e3]">
        <Svg><path d="M1 2h14v9H1z" fill="#9be29b" stroke="#4a7a4a" /><path d="M5 2v9M10 2v9" stroke="#4a7a4a" /><path d="M1 14h14" stroke="#c33" strokeWidth="1.500" /></Svg>
      </BarButton>
      <BarButton label="Result sets">
        <Svg><path d="M2 2v10M5 2v10M8 2v10M11 2v10M14 2v10" stroke="#3a86c4" strokeWidth="1.500" /><path d="M1 14h14" stroke="#c33" strokeWidth="1.500" /></Svg>
      </BarButton>
      <span className="w-[3px]" />
      <Combo label="Frames" value="20 Frames" width="w-[67px]" />
      <Combo label="Duration" value="2 Sec (Auto)" width="w-[66px]" />
      <Divider />
      <BarButton label="Export"><Icon name="exportImg" /></BarButton>
      <Divider />
      <BarButton label="Zoom to fit"><Icon name="zoomOut" /></BarButton>
      <BarButton label="Contours">
        <Svg>
          <path d="M1 3h14" stroke="#d00" strokeWidth="3" strokeDasharray="2 1" />
          <path d="M1 8h14" stroke="#0a0" strokeWidth="3" strokeDasharray="2 1" />
          <path d="M1 13h14" stroke="#00c" strokeWidth="3" strokeDasharray="2 1" />
        </Svg>
      </BarButton>
      <BarButton label="Update"><Icon name="wrench" /></BarButton>
      <Divider />
      <BarButton label="Previous"><Icon name="grayChip" /></BarButton>
      <BarButton label="Next"><Icon name="grayChip" /></BarButton>
      <Divider />
      <BarButton label="Cycle"><Icon name="cyc" /></BarButton>
      <input aria-label="Cycles" disabled defaultValue="3 Cycles" className="w-[39px] h-[14px] pl-[2px] border border-[#d0d0d8] text-[#a0a0a0]" />
      <span className="ml-[2px] mt-[7px]"><Caret small /></span>
    </div>
    <div className="flex-1 pl-[51px] pt-[13px] pr-[18px] bg-white">
      <div className="h-[4px] border border-[#a8a8a8] border-x-[#333] bg-[#c2c2c2]" />
      <div className="flex mt-[20px] h-[10px] border border-[#b0b0b0] bg-[#efefef] text-center leading-[9px]">
        <span className="flex-1 border-r border-[#999]">1</span>
        <span className="flex-1">2</span>
      </div>
    </div>
    <div className="flex h-[13px] leading-[13px] shrink-0 text-[#444]">
      <button className="w-[28px] bg-white text-[#1b6ec2] border-r border-[#d5d5da]">Graph</button>
      <button className="w-[84px]">Graphics Annotations</button>
      <button className="w-[84px]">Selection Information</button>
    </div>
  </section>
);

// ---------- tabular data ----------
const samples = [
  ["5.e-002", "0.", "0.2115", "6.259e-002"],
  ["0.1", "0.", "0.423", "0.12518"],
  ["0.15", "0.", "0.6345", "0.18777"],
  ["0.2", "0.", "0.84686", "0.25116"],
  ["0.25", "0.", "1.0612", "0.31485"],
  ["0.3", "0.", "1.2741", "0.37831"],
  ["0.35", "0.", "1.4851", "0.44101"],
  ["0.4", "0.", "1.6961", "0.5037"],
];

const series = [
  ["Minimum [mm]", "text-[#b0203a]", "w-[69px]"],
  ["Maximum [mm]", "text-[#2a8a2a]", "w-[69px]"],
  ["Average [mm]", "text-[#2a2ab0]", "w-[62px]"],
];

const TabularPanel = () => (
  <section className="flex flex-col w-[431px] shrink-0 border-l border-[#dcdce0]">
    <PanelHeader title="Tabular Data" />
    <div className="flex flex-1 min-h-0">
      <div className="flex-1 overflow-hidden bg-[#a0a0a0]">
        <table className="w-[246px] table-fixed border-collapse whitespace-nowrap text-[#222] bg-[#eae8e6]">
          <thead>
            <tr className="h-[12px] leading-[11px] bg-[#f0f0f0]">
              <th className="p-0 w-[14px] border-r border-[#aaa]" />
              <th className="p-0 w-[32px] pl-[2px] text-left font-normal border-r border-[#aaa]">Time [s]</th>
              {series.map(([name, color, width]) => (
                <th key={name} className={clsx("p-0 pl-[2px] font-normal border-r border-[#aaa]", width)}>
                  <label className={clsx("flex items-center gap-[4px]", color)}>
                    <Check checked />
                    {name}
                  </label>
                </th>
              ))}
            </tr>
          </thead>
          <tbody>
            {samples.map((cells, i) => (
              <tr key={i} className="h-[10px] leading-[9px] border-t border-[#c6c4c2]">
                <td className="p-0 pl-[1px] border-r border-[#aaa] bg-[#f0f0f0]">{i + 1}</td>
                {cells.map((cell, j) => (
                  <td key={j} className="p-0 pl-[2px] border-r border-[#c6c4c2]">{cell}</td>
                ))}
              </tr>
            ))}
          </tbody>
        </table>
      </div>
      <ScrollBar thumb="h-[10px]" />
    </div>
  </section>
);

const StatusBar = () => (
  <footer className="flex items-center justify-end h-[14px] pr-[5px] bg-[#0078d0] text-white text-[8px] shrink-0 whitespace-nowrap">
    <Svg size="w-[10px] h-[10px] mr-[1px]">
      <path d="M1 5h12v8H6l-3 3v-3H1z" fill="#f2d77a" />
      <circle cx="10" cy="6" r="5" fill="#1d3fb5" stroke="#fff" />
      <path d="M10 3v1M10 5v4" stroke="#fff" strokeWidth="1.500" />
    </Svg>
    <span>3 Messages</span>
    <span className="ml-[10px]">No Selection</span>
    <Svg size="w-[6px] h-[4px] ml-[12px] mr-[4px]" box="0 0 8 6"><path d="M0 5h8L4 0z" fill="#fff" /></Svg>
    <span>Metric (mm, kg, N, s, mV, mA)</span>
    <span className="ml-[7px]">Degrees</span>
    <span className="ml-[7px]">rad/s</span>
    <span className="ml-[7px]">Celsius</span>
  </footer>
);

const App = () => (
  <div className="flex flex-col h-screen py-[13px] bg-black text-[7px] leading-[12px] text-[#222] font-['Open_Sans',sans-serif] overflow-hidden">
    <TitleBar />
    <Tabs />
    <Ribbon />
    <main className="flex flex-1 min-h-0 bg-[#eeeef1]">
      <aside className="flex flex-col w-[275px] shrink-0">
        <Outline />
        <div className="h-[3px] shrink-0" />
        <Details />
      </aside>
      <div className="flex flex-col flex-1 min-w-0 ml-[3px]">
        <GraphicsToolbar />
        <div className="relative flex-1 min-h-0 bg-white">
          <Part />
          <Legend />
        </div>
        <div className="flex h-[99px] shrink-0">
          <GraphPanel />
          <TabularPanel />
        </div>
      </div>
    </main>
    <StatusBar />
  </div>
);

export default App;
